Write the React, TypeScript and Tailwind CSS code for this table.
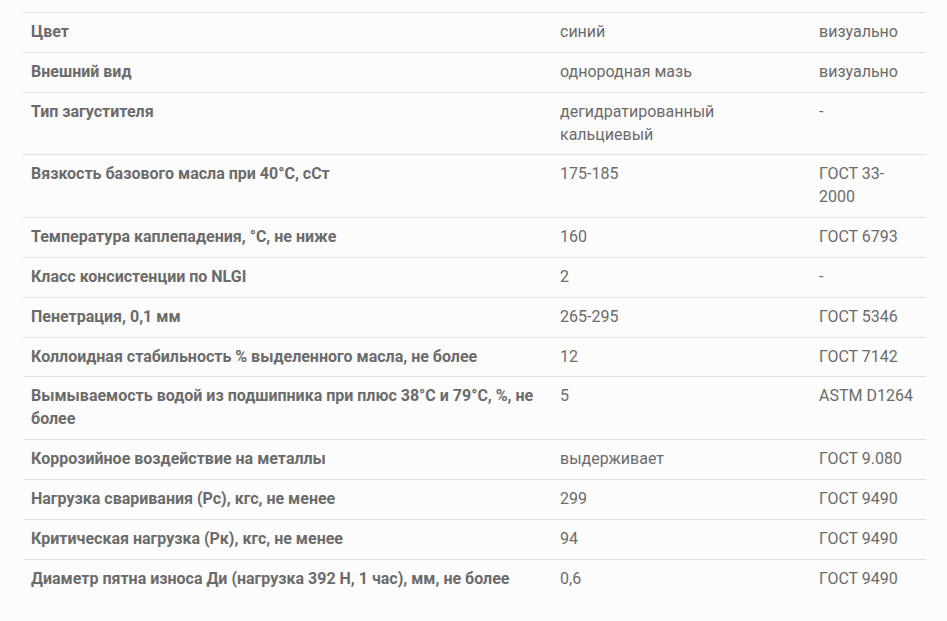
const rows: [string, string, string][] = [
  ['Цвет', 'синий', 'визуально'],
  ['Внешний вид', 'однородная мазь', 'визуально'],
  ['Тип загустителя', 'дегидратированный кальциевый', '-'],
  ['Вязкость базового масла при 40°С, сСт', '175-185', 'ГОСТ 33-2000'],
  ['Температура каплепадения, °С, не ниже', '160', 'ГОСТ 6793'],
  ['Класс консистенции по NLGI', '2', '-'],
  ['Пенетрация, 0,1 мм', '265-295', 'ГОСТ 5346'],
  ['Коллоидная стабильность % выделенного масла, не более', '12', 'ГОСТ 7142'],
  ['Вымываемость водой из подшипника при плюс 38°С и 79°С, %, не более', '5', 'ASTM D1264'],
  ['Коррозийное воздействие на металлы', 'выдерживает', 'ГОСТ 9.080'],
  ['Нагрузка сваривания (Рс), кгс, не менее', '299', 'ГОСТ 9490'],
  ['Критическая нагрузка (Рк), кгс, не менее', '94', 'ГОСТ 9490'],
  ['Диаметр пятна износа Ди (нагрузка 392 Н, 1 час), мм, не более', '0,6', 'ГОСТ 9490'],
]

export default function App() {
  return (
    <div className="min-h-[621px] bg-[#fcfcfc] pl-[23px] pr-[21px] pt-[12px] font-['Roboto',sans-serif] text-[16px] leading-[1.42857] text-[#6b6b6b]">
      <table className="w-full table-fixed border-collapse">
        <colgroup>
          <col className="w-[529px]" />
          <col className="w-[259px]" />
          <col />
        </colgroup>
        <tbody>
          {rows.map(([param, value, method]) => (
            <tr key={param} className="border-t border-[#e0e0e0]">
              <td className="px-2 py-2 align-top font-bold">{param}</td>
              <td className="px-2 py-2 align-top">{value}</td>
              <td className="px-2 py-2 align-top">{method}</td>
            </tr>
          ))}
        </tbody>
      </table>
    </div>
  )
}
